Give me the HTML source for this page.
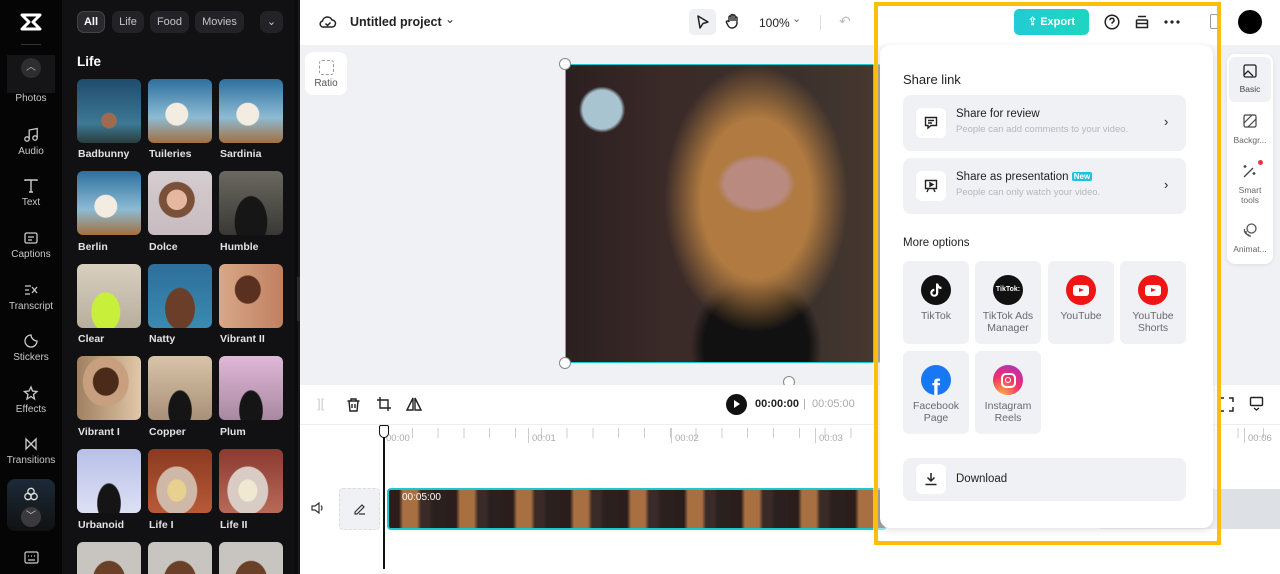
<!DOCTYPE html>
<html><head><meta charset="utf-8"><style>
*{box-sizing:border-box;margin:0;padding:0}
html,body{width:1280px;height:574px;overflow:hidden}
body{position:relative;font-family:"Liberation Sans",sans-serif;background:#fff}
#root{position:absolute;left:0;top:0;width:1280px;height:574px;overflow:hidden}
.a{position:absolute}
.rail{left:0;top:0;width:62px;height:574px;background:#050505}
.ri{position:absolute;left:0;width:62px;text-align:center;color:#c9c9cc;font-size:10px}
.ri svg{display:block;margin:0 auto 3px}
.panel{left:62px;top:0;width:236px;height:574px;background:#111114}
.chip{position:absolute;top:11px;height:22px;border-radius:7px;background:#232327;color:#c5c5c8;font-size:11px;line-height:22px;text-align:center}
.th{position:absolute;width:64px;height:64px;border-radius:6px;overflow:hidden}
.lb{position:absolute;color:#e2e2e4;font-size:10.5px;font-weight:bold}
.card{background:#eff1f4;border-radius:8px;position:absolute}
.opt{position:absolute;width:66px;height:83px;background:#eff1f4;border-radius:6px;text-align:center;font-size:10.5px;color:#666a70;line-height:12px}
.opt .ic{width:30px;height:30px;border-radius:50%;margin:14px auto 5px;display:flex;align-items:center;justify-content:center}
</style></head><body><div id="root">

<div class="a rail">
 <svg class="a" style="left:20px;top:13px" width="22" height="18" viewBox="0 0 22 18"><path d="M2 2h18l-7 7 7 7H2l7-7z" fill="none" stroke="#fff" stroke-width="3" stroke-linejoin="round"/></svg>
 <div class="a" style="left:21px;top:44px;width:20px;height:1px;background:#333"></div>
 <div class="a" style="left:7px;top:55px;width:48px;height:38px;background:#151517"></div>
 <div class="a" style="left:21px;top:58px;width:20px;height:20px;border-radius:50%;background:#2e2e31;color:#bbb;font-size:10px;text-align:center;line-height:20px">︿</div>
 <div class="ri" style="top:93px">Photos</div>
 <div class="ri" style="top:127px"><svg width="16" height="16" viewBox="0 0 16 16" fill="none" stroke="#ccc" stroke-width="1.3"><circle cx="4" cy="12" r="2.2"/><circle cx="12" cy="11" r="2.2"/><path d="M6.2 12V3l8-1.5V11"/></svg>Audio</div>
 <div class="ri" style="top:178px"><svg width="16" height="16" viewBox="0 0 16 16" fill="none" stroke="#ccc" stroke-width="1.4"><path d="M2 3V2h12v1M8 2v12M6 14h4"/></svg>Text</div>
 <div class="ri" style="top:230px"><svg width="16" height="16" viewBox="0 0 16 16" fill="none" stroke="#ccc" stroke-width="1.3"><rect x="2" y="3" width="12" height="10" rx="1.5"/><path d="M5 7h6M5 10h4"/></svg>Captions</div>
 <div class="ri" style="top:282px"><svg width="16" height="16" viewBox="0 0 16 16" fill="none" stroke="#ccc" stroke-width="1.3"><path d="M2 4h6M2 8h4M2 12h5M9 5l5 6M14 5l-5 6"/></svg>Transcript</div>
 <div class="ri" style="top:333px"><svg width="16" height="16" viewBox="0 0 16 16" fill="none" stroke="#ccc" stroke-width="1.3"><path d="M14 8A6 6 0 1 1 8 2c0 3 3 6 6 6z"/></svg>Stickers</div>
 <div class="ri" style="top:385px"><svg width="16" height="16" viewBox="0 0 16 16" fill="none" stroke="#ccc" stroke-width="1.3"><path d="M8 2l1.5 4 4.5.5-3.5 3 1 4.5L8 11.5 4 14l1-4.5-3.5-3L6 6z"/></svg>Effects</div>
 <div class="ri" style="top:436px"><svg width="16" height="16" viewBox="0 0 16 16" fill="none" stroke="#ccc" stroke-width="1.3"><path d="M3 3v10l10-10v10z"/></svg>Transitions</div>
 <div class="a" style="left:7px;top:479px;width:48px;height:52px;border-radius:8px;background:linear-gradient(#1b2a38,#111)"></div>
 <svg class="a" style="left:23px;top:486px" width="16" height="16" viewBox="0 0 16 16" fill="none" stroke="#ddd" stroke-width="1.3"><circle cx="8" cy="5.5" r="3.2"/><circle cx="5" cy="10.5" r="3.2"/><circle cx="11" cy="10.5" r="3.2"/></svg>
 <div class="a" style="left:21px;top:507px;width:20px;height:20px;border-radius:50%;background:#3a3a3d;color:#ccc;font-size:10px;text-align:center;line-height:20px">﹀</div>
 <svg class="a" style="left:24px;top:551px" width="15" height="13" viewBox="0 0 15 13" fill="none" stroke="#ccc" stroke-width="1.2"><rect x="1" y="1" width="13" height="11" rx="1.5"/><path d="M4 5h1M7 5h1M10 5h1M4 9h7"/></svg>
</div>

<div class="a panel">
 <div class="chip" style="left:15px;width:28px;background:#2a2a2e;border:1px solid #444;color:#fff;font-weight:bold;line-height:20px">All</div>
 <div class="chip" style="left:50px;width:32px">Life</div>
 <div class="chip" style="left:88px;width:39px">Food</div>
 <div class="chip" style="left:133px;width:49px">Movies</div>
 <div class="chip" style="left:198px;width:23px">⌄</div>
 <div class="a" style="left:15px;top:54px;color:#fff;font-weight:bold;font-size:13.5px">Life</div>
 <div class="a" style="left:232px;top:0;width:4px;height:574px;background:#0c0c0e"></div>
</div>
<div class="a" style="left:298px;top:0;width:2px;height:574px;background:#1a1a1d"></div>
<div class="a" style="left:297px;top:277px;width:8px;height:44px;border-radius:0 5px 5px 0;background:#2a2a2d"></div>

<div class="th" style="left:77px;top:79px;background:radial-gradient(circle at 50% 65%,#a06a50 0 14%,transparent 16%),linear-gradient(#1f4c6c,#3d7894 70%,#2a3d40)"></div>
<div class="th" style="left:148px;top:79px;background:radial-gradient(ellipse at 45% 55%,#f3ece0 0 22%,transparent 24%),linear-gradient(#2d6f9e,#8dbbd4 60%,#a27040)"></div>
<div class="th" style="left:219px;top:79px;background:radial-gradient(ellipse at 45% 55%,#f3ece0 0 22%,transparent 24%),linear-gradient(#2d6f9e,#8dbbd4 60%,#a27040)"></div>
<div class="th" style="left:77px;top:171px;background:radial-gradient(ellipse at 45% 55%,#f3ece0 0 22%,transparent 24%),linear-gradient(#2d6f9e,#8dbbd4 60%,#a27040)"></div>
<div class="th" style="left:148px;top:171px;background:radial-gradient(ellipse at 45% 45%,#e6b79f 0 20%,#7a5038 21% 35%,transparent 37%),linear-gradient(#d6cdd0,#c7bbc0)"></div>
<div class="th" style="left:219px;top:171px;background:radial-gradient(ellipse at 50% 80%,#161616 0 35%,transparent 37%),linear-gradient(#6a6860,#3a3834)"></div>
<div class="th" style="left:77px;top:264px;background:radial-gradient(ellipse at 45% 75%,#c8f03a 0 28%,transparent 30%),linear-gradient(#d8cfc0,#b8ae9c)"></div>
<div class="th" style="left:148px;top:264px;background:radial-gradient(ellipse at 50% 70%,#6a3e28 0 32%,transparent 34%),linear-gradient(#2d6f9a,#3a8ab0)"></div>
<div class="th" style="left:219px;top:264px;background:radial-gradient(ellipse at 45% 40%,#5a3020 0 25%,transparent 27%),linear-gradient(90deg,#d8a888,#c08060)"></div>
<div class="th" style="left:77px;top:356px;background:radial-gradient(ellipse at 45% 40%,#4a2a18 0 25%,#c8a080 27% 45%,transparent 47%),linear-gradient(90deg,#a08060,#e0c8a8)"></div>
<div class="th" style="left:148px;top:356px;background:radial-gradient(ellipse at 50% 85%,#151515 0 25%,transparent 27%),linear-gradient(#d8c4a8,#a89078)"></div>
<div class="th" style="left:219px;top:356px;background:radial-gradient(ellipse at 50% 85%,#151515 0 25%,transparent 27%),linear-gradient(#e0b8d8,#a888a0)"></div>
<div class="th" style="left:77px;top:449px;background:radial-gradient(ellipse at 50% 85%,#151515 0 25%,transparent 27%),linear-gradient(#b8c0e8,#dde0f4)"></div>
<div class="th" style="left:148px;top:449px;background:radial-gradient(ellipse at 45% 65%,#e8d090 0 18%,#d0b8a8 20% 40%,transparent 42%),linear-gradient(#8a3a20,#b85a38)"></div>
<div class="th" style="left:219px;top:449px;background:radial-gradient(ellipse at 45% 65%,#f0e8d0 0 18%,#d8ccc4 20% 40%,transparent 42%),linear-gradient(#8a3a30,#b86a58)"></div>
<div class="th" style="left:77px;top:542px;background:radial-gradient(ellipse at 50% 60%,#6a4028 0 35%,transparent 37%),#c8c4c0"></div>
<div class="th" style="left:148px;top:542px;background:radial-gradient(ellipse at 50% 60%,#6a4028 0 35%,transparent 37%),#c8c4c0"></div>
<div class="th" style="left:219px;top:542px;background:radial-gradient(ellipse at 50% 60%,#6a4028 0 35%,transparent 37%),#c8c4c0"></div>
<div class="lb" style="left:78px;top:148px">Badbunny</div><div class="lb" style="left:149px;top:148px">Tuileries</div><div class="lb" style="left:220px;top:148px">Sardinia</div>
<div class="lb" style="left:78px;top:241px">Berlin</div><div class="lb" style="left:149px;top:241px">Dolce</div><div class="lb" style="left:220px;top:241px">Humble</div>
<div class="lb" style="left:78px;top:333px">Clear</div><div class="lb" style="left:149px;top:333px">Natty</div><div class="lb" style="left:220px;top:333px">Vibrant II</div>
<div class="lb" style="left:78px;top:426px">Vibrant I</div><div class="lb" style="left:149px;top:426px">Copper</div><div class="lb" style="left:220px;top:426px">Plum</div>
<div class="lb" style="left:78px;top:519px">Urbanoid</div><div class="lb" style="left:149px;top:519px">Life I</div><div class="lb" style="left:220px;top:519px">Life II</div>

<div class="a" style="left:300px;top:0;width:980px;height:45px;background:#fff"></div>
<svg class="a" style="left:319px;top:14px" width="18" height="16" viewBox="0 0 18 16" fill="none" stroke="#222" stroke-width="1.5"><path d="M5 13h8a3.5 3.5 0 0 0 0-7 5 5 0 0 0-9.5 1A3 3 0 0 0 5 13z"/><path d="M6.5 9.5l2 2 3-3"/></svg>
<div class="a" style="left:350px;top:15px;font-size:12.5px;font-weight:bold;color:#222">Untitled project</div>
<div class="a" style="left:445px;top:12px;font-size:12px;color:#333">⌄</div>
<div class="a" style="left:689px;top:9px;width:27px;height:26px;border-radius:5px;background:#eef0f3"></div>
<svg class="a" style="left:696px;top:14px" width="14" height="16" viewBox="0 0 14 16" fill="none" stroke="#222" stroke-width="1.5"><path d="M2 2l10 6-5 1.5L4 14z" stroke-linejoin="round"/></svg>
<svg class="a" style="left:725px;top:13px" width="15" height="17" viewBox="0 0 15 17" fill="none" stroke="#222" stroke-width="1.4"><path d="M4 9V4a1 1 0 0 1 2 0v4M6 8V2.5a1 1 0 0 1 2 0V8M8 8V3a1 1 0 0 1 2 0v5M10 8V5a1 1 0 0 1 2 0v5a5 5 0 0 1-5 5 4.5 4.5 0 0 1-4-2.5L1.5 9.5a1 1 0 0 1 2-1L4 9"/></svg>
<div class="a" style="left:759px;top:16px;font-size:12px;color:#222">100%</div>
<div class="a" style="left:792px;top:12px;font-size:11px;color:#666">⌄</div>
<div class="a" style="left:820px;top:15px;width:1px;height:15px;background:#ddd"></div>
<div class="a" style="left:839px;top:13px;font-size:14px;color:#bbb">↶</div>

<div class="a" style="left:300px;top:45px;width:980px;height:340px;background:#eff1f4"></div>
<div class="a" style="left:305px;top:52px;width:42px;height:43px;border-radius:8px;background:#fff;text-align:center;font-size:10px;color:#555">
 <div style="width:15px;height:15px;border:1.3px dashed #999;border-radius:3px;margin:8px auto 3px"></div>Ratio</div>
<div class="a" style="left:565px;top:64px;width:330px;height:299px;border:1.5px solid #1cc8d0;background:
radial-gradient(ellipse 12% 10% at 58% 40%,#b88a80 0 80%,transparent 100%),
radial-gradient(ellipse 28% 45% at 58% 45%,#b07a40 0 60%,transparent 100%),
radial-gradient(ellipse 20% 25% at 58% 95%,#111 0 80%,transparent 100%),
radial-gradient(circle at 11% 15%,#a8c4d0 0 5%,transparent 6%),
linear-gradient(90deg,#2b1f20,#3a2a28 30%,#3a302c 70%,#4a3a30)"></div>
<div class="a" style="left:559px;top:58px;width:12px;height:12px;border-radius:50%;background:#fff;border:1px solid #888"></div>
<div class="a" style="left:559px;top:357px;width:12px;height:12px;border-radius:50%;background:#fff;border:1px solid #888"></div>
<div class="a" style="left:783px;top:376px;width:12px;height:12px;border-radius:50%;background:#fff;border:1px solid #888"></div>

<div class="a" style="left:1227px;top:54px;width:46px;height:210px;border-radius:8px;background:#fff;box-shadow:0 1px 4px rgba(0,0,0,.08)"></div>
<div class="a" style="left:1229px;top:57px;width:42px;height:45px;border-radius:6px;background:#eff1f4"></div>
<div class="a" style="left:1227px;top:64px;width:46px;text-align:center;font-size:8.5px;color:#444"><svg width="14" height="14" viewBox="0 0 14 14" fill="none" stroke="#222" stroke-width="1.3" style="display:block;margin:0 auto 6px"><rect x="1" y="1" width="12" height="12" rx="1.5"/><path d="M1 11l4-4 5 5M9 4.5h.1"/></svg>Basic</div>
<div class="a" style="left:1227px;top:114px;width:46px;text-align:center;font-size:8.5px;color:#666"><svg width="14" height="14" viewBox="0 0 14 14" fill="none" stroke="#444" stroke-width="1.2" style="display:block;margin:0 auto 7px"><rect x="1" y="1" width="12" height="12" rx="1.5"/><path d="M1 9l8-8M5 13l8-8"/></svg>Backgr...</div>
<div class="a" style="left:1227px;top:163px;width:46px;text-align:center;font-size:8.5px;color:#666;line-height:10px"><svg width="16" height="16" viewBox="0 0 16 16" fill="none" stroke="#444" stroke-width="1.3" style="display:block;margin:0 auto 6px"><path d="M2 14l9-9M3 2v3M1.5 3.5h3M12 9v3M10.5 10.5h3"/></svg>Smart<br>tools</div>
<div class="a" style="left:1258px;top:160px;width:5px;height:5px;border-radius:50%;background:#f0324a"></div>
<div class="a" style="left:1227px;top:222px;width:46px;text-align:center;font-size:8.5px;color:#666"><svg width="16" height="16" viewBox="0 0 16 16" fill="none" stroke="#555" stroke-width="1.3" style="display:block;margin:0 auto 6px"><circle cx="9.5" cy="6.5" r="4.5"/><path d="M4 9a4.5 4.5 0 0 0 5 5M2.5 7a5 5 0 0 0 5 6"/></svg>Animat...</div>

<div class="a" style="left:300px;top:385px;width:980px;height:40px;background:#fff;border-bottom:1px solid #eee"></div>
<div class="a" style="left:317px;top:396px;font-size:13px;color:#ccc">][</div>
<svg class="a" style="left:346px;top:397px" width="15" height="16" viewBox="0 0 15 16" fill="none" stroke="#222" stroke-width="1.4"><path d="M1.5 4h12M5 4V2h5v2M3 4l1 10h7l1-10M6 7v4M9 7v4"/></svg>
<svg class="a" style="left:376px;top:396px" width="16" height="16" viewBox="0 0 16 16" fill="none" stroke="#222" stroke-width="1.4"><path d="M4 1v11h11M1 4h11v11"/></svg>
<svg class="a" style="left:406px;top:397px" width="16" height="14" viewBox="0 0 16 14" fill="none" stroke="#222" stroke-width="1.4"><path d="M7 1v12H1zM9 1v12h6z"/></svg>
<div class="a" style="left:726px;top:394px;width:21px;height:21px;border-radius:50%;background:#111"></div>
<div class="a" style="left:734px;top:400px;width:0;height:0;border-left:6px solid #fff;border-top:4.5px solid transparent;border-bottom:4.5px solid transparent"></div>
<div class="a" style="left:755px;top:398px;font-size:11px;font-weight:bold;color:#222">00:00:00</div>
<div class="a" style="left:803px;top:398px;font-size:11px;color:#aaa">|&nbsp; 00:05:00</div>
<svg class="a" style="left:1219px;top:397px" width="15" height="15" viewBox="0 0 15 15" fill="none" stroke="#222" stroke-width="1.5"><path d="M1 5V1h4M10 1h4v4M14 10v4h-4M5 14H1v-4"/></svg>
<svg class="a" style="left:1249px;top:396px" width="15" height="15" viewBox="0 0 15 15" fill="none" stroke="#222" stroke-width="1.4"><rect x="1.5" y="1.5" width="12" height="8" rx="1"/><path d="M5 12l2.5 2 2.5-2"/></svg>

<div class="a" style="left:386px;top:428px;width:894px;height:10px;background:repeating-linear-gradient(90deg,#ccc 0 1px,transparent 1px 25.8px)"></div>
<div class="a" style="left:386px;top:433px;font-size:9.5px;color:#aaa">00:00</div>
<div class="a" style="left:528px;top:428px;width:1px;height:15px;background:#ccc"></div><div class="a" style="left:532px;top:433px;font-size:9.5px;color:#aaa">00:01</div>
<div class="a" style="left:671px;top:428px;width:1px;height:15px;background:#ccc"></div><div class="a" style="left:675px;top:433px;font-size:9.5px;color:#aaa">00:02</div>
<div class="a" style="left:815px;top:428px;width:1px;height:15px;background:#ccc"></div><div class="a" style="left:819px;top:433px;font-size:9.5px;color:#aaa">00:03</div>
<div class="a" style="left:1244px;top:428px;width:1px;height:15px;background:#ccc"></div><div class="a" style="left:1248px;top:433px;font-size:9.5px;color:#aaa">00:06</div>
<div class="a" style="left:1100px;top:489px;width:180px;height:40px;background:#dde0e4"></div>
<svg class="a" style="left:311px;top:502px" width="14" height="12" viewBox="0 0 14 12" fill="none" stroke="#333" stroke-width="1.2"><path d="M1 4h3l4-3v10L4 8H1zM10 3.5a3.5 3.5 0 0 1 0 5"/></svg>
<div class="a" style="left:339px;top:488px;width:41px;height:42px;border-radius:4px;background:#eff1f4;border:1px dashed #ddd"></div>
<svg class="a" style="left:353px;top:502px" width="13" height="13" viewBox="0 0 13 13" fill="none" stroke="#333" stroke-width="1.2"><path d="M2 10l7-7 2 2-7 7H2zM6 12h6"/></svg>
<div class="a" style="left:387px;top:488px;width:500px;height:42px;border:2px solid #1cc8d0;border-radius:4px;background:
repeating-linear-gradient(90deg,#2a1d1c 0 10px,#a87040 14px 28px,#3a2a28 32px 40px,#2a2020 44px 57px)"></div>
<div class="a" style="left:402px;top:492px;font-size:10px;color:#fff">00:05:00</div>
<div class="a" style="left:383px;top:437px;width:2px;height:132px;background:#111"></div>
<div class="a" style="left:379px;top:425px;width:10px;height:13px;border:1.5px solid #111;border-radius:2px 2px 5px 5px;background:#fff"></div>

<div class="a" style="left:1210px;top:14px;width:8px;height:15px;border:1.5px solid #222;border-radius:2px"></div>
<div class="a" style="left:1238px;top:10px;width:24px;height:24px;border-radius:50%;background:#000"></div>

<div class="a" style="left:873px;top:0;width:348px;height:548px;background:rgba(255,255,255,.55)"></div>
<div class="a" style="left:880px;top:45px;width:333px;height:483px;border-radius:10px;background:#fff;box-shadow:0 2px 8px rgba(0,0,0,.12)"></div>
<div class="a" style="left:1014px;top:9px;width:75px;height:26px;border-radius:5px;background:linear-gradient(90deg,#22ccd4,#1fd5c0);color:#fff;font-size:11px;font-weight:bold;line-height:26px;text-align:center">⇪ Export</div>
<svg class="a" style="left:1104px;top:14px" width="16" height="16" viewBox="0 0 16 16" fill="none" stroke="#222" stroke-width="1.5"><circle cx="8" cy="8" r="6.8"/><path d="M6 6.3a2 2 0 1 1 2.8 1.8C8.2 8.5 8 9 8 9.7M8 11.5v.3"/></svg>
<svg class="a" style="left:1135px;top:15px" width="14" height="14" viewBox="0 0 14 14" fill="none" stroke="#222" stroke-width="1.5"><path d="M3 1.5h8M1.5 5h11M1.5 5v7.5h11V5M1.5 8.5h11"/></svg>
<svg class="a" style="left:1164px;top:20px" width="16" height="4" viewBox="0 0 16 4" fill="#222"><circle cx="2" cy="2" r="1.6"/><circle cx="8" cy="2" r="1.6"/><circle cx="14" cy="2" r="1.6"/></svg>

<div class="a" style="left:903px;top:72px;font-size:13px;color:#222">Share link</div>
<div class="card" style="left:903px;top:95px;width:283px;height:56px"></div>
<div class="a" style="left:916px;top:108px;width:30px;height:30px;border-radius:6px;background:#fff"></div>
<svg class="a" style="left:924px;top:116px" width="14" height="14" viewBox="0 0 14 14" fill="none" stroke="#222" stroke-width="1.4"><path d="M1.5 1.5h11v8H7l-3 2.5v-2.5H1.5zM4 4.5h6M4 7h4"/></svg>
<div class="a" style="left:956px;top:108px;font-size:11.5px;color:#222">Share for review</div>
<div class="a" style="left:956px;top:124px;font-size:9.5px;color:#b4b7bc">People can add comments to your video.</div>
<div class="a" style="left:1164px;top:114px;font-size:13px;color:#222">›</div>
<div class="card" style="left:903px;top:158px;width:283px;height:56px"></div>
<div class="a" style="left:916px;top:171px;width:30px;height:30px;border-radius:6px;background:#fff"></div>
<svg class="a" style="left:924px;top:179px" width="14" height="14" viewBox="0 0 14 14" fill="none" stroke="#222" stroke-width="1.4"><path d="M1.5 1.5h11v8h-11zM3 13l1.5-3.5M11 13l-1.5-3.5"/><path d="M6 3.8l3 1.7-3 1.7z" fill="#222"/></svg>
<div class="a" style="left:956px;top:171px;font-size:11.5px;color:#222">Share as presentation <span style="background:#18c4e0;color:#fff;font-size:8px;font-weight:bold;padding:0 2px;border-radius:2px;vertical-align:1px">New</span></div>
<div class="a" style="left:956px;top:187px;font-size:9.5px;color:#b4b7bc">People can only watch your video.</div>
<div class="a" style="left:1164px;top:177px;font-size:13px;color:#222">›</div>

<div class="a" style="left:903px;top:237px;font-size:11.5px;color:#222">More options</div>
<div class="opt" style="left:903px;top:261px"><div class="ic" style="background:#111"><svg width="16" height="16" viewBox="0 0 16 16"><path d="M8 1.5h2.3c.2 2 1.4 3.2 3.2 3.3v2.3c-1.2 0-2.3-.4-3.2-1v4.7a4 4 0 1 1-4-4v2.3a1.8 1.8 0 1 0 1.7 1.8z" fill="#fff"/></svg></div>TikTok</div>
<div class="opt" style="left:975px;top:261px"><div class="ic" style="background:#111;color:#fff;font-size:7px;font-weight:bold">TikTok:</div>TikTok Ads<br>Manager</div>
<div class="opt" style="left:1048px;top:261px"><div class="ic" style="background:#f01414"><div style="width:16px;height:11px;border-radius:3px;background:#fff;position:relative"><div style="position:absolute;left:6px;top:3px;border-left:5px solid #f01414;border-top:2.5px solid transparent;border-bottom:2.5px solid transparent"></div></div></div>YouTube</div>
<div class="opt" style="left:1120px;top:261px"><div class="ic" style="background:#f01414"><div style="width:16px;height:11px;border-radius:3px;background:#fff;position:relative"><div style="position:absolute;left:6px;top:3px;border-left:5px solid #f01414;border-top:2.5px solid transparent;border-bottom:2.5px solid transparent"></div></div></div>YouTube<br>Shorts</div>
<div class="opt" style="left:903px;top:351px"><div class="ic" style="background:#1877f2;color:#fff;font-size:24px;font-weight:bold;align-items:flex-end;overflow:hidden">f</div>Facebook<br>Page</div>
<div class="opt" style="left:975px;top:351px"><div class="ic" style="background:radial-gradient(circle at 30% 100%,#fdb03a,#f0306a 50%,#a030d0)"><div style="width:15px;height:15px;border:2px solid #fff;border-radius:5px;position:relative"><div style="position:absolute;left:2.5px;top:2.5px;width:6px;height:6px;border:1.8px solid #fff;border-radius:50%"></div></div></div>Instagram<br>Reels</div>

<div class="card" style="left:903px;top:458px;width:283px;height:43px"></div>
<div class="a" style="left:916px;top:464px;width:30px;height:30px;border-radius:6px;background:#fff"></div>
<svg class="a" style="left:924px;top:472px" width="14" height="14" viewBox="0 0 14 14" fill="none" stroke="#222" stroke-width="1.5"><path d="M7 1v8M3.5 5.5L7 9l3.5-3.5M1.5 12.5h11"/></svg>
<div class="a" style="left:956px;top:473px;font-size:11.5px;color:#222">Download</div>

<div class="a" style="left:874px;top:2px;width:347px;height:543px;border:4px solid #fcbd0b"></div>
</div></body></html>
